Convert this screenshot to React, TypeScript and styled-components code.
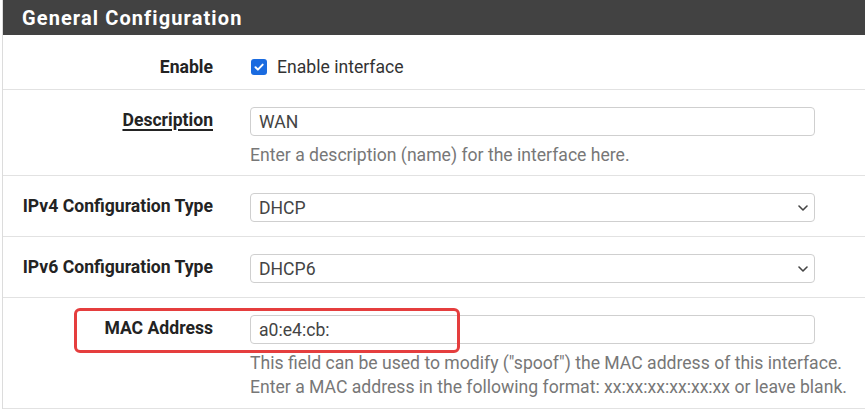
import React from "react";
import styled, { createGlobalStyle } from "styled-components";

const GlobalStyle = createGlobalStyle`
  html, body { margin: 0; padding: 0; background: #fff; }
  body { font-family: Roboto, "Liberation Sans", Arial, sans-serif; }
  * { box-sizing: border-box; }
`;

const Page = styled.div`
  padding-left: 2px;
  width: 865px;
  overflow: hidden;
`;

const Panel = styled.section`
  border-left: 1px solid #dcdcdc;
`;

const Header = styled.h2`
  margin: 0;
  height: 35px;
  background: #424242;
  color: #fff;
  display: flex;
  align-items: center;
  padding-left: 19px;
  font-size: 20px;
  font-weight: 700;
  letter-spacing: 1.1px;
`;

const Row = styled.div<{ $pb: number }>`
  position: relative;
  display: grid;
  grid-template-columns: 210px 565px;
  column-gap: 37px;
  padding: 17px 0 ${(p) => p.$pb}px;
  border-bottom: 1px solid #e2e2e2;
`;

const Label = styled.label<{ $lh: number; $underline?: boolean }>`
  text-align: right;
  padding-top: 1px;
  font-size: 17.6px;
  font-weight: 700;
  color: #232323;
  line-height: ${(p) => p.$lh}px;
  white-space: nowrap;
  span {
    text-decoration: ${(p) => (p.$underline ? "underline" : "none")};
    text-decoration-thickness: 2px;
    text-underline-offset: 3px;
  }
`;

const Control = styled.div`
  display: flex;
  flex-direction: column;
  min-width: 0;
`;

const CheckLine = styled.div`
  display: flex;
  align-items: center;
  height: 29px;
  gap: 10px;
  padding-left: 1px;
  font-size: 17.6px;
  color: #333;
`;

const CheckBox = styled.span`
  width: 16px;
  height: 16px;
  border-radius: 3px;
  background: #1a6be0;
  display: inline-flex;
  align-items: center;
  justify-content: center;
`;

const TextInput = styled.input`
  height: 29px;
  width: 100%;
  border: 1px solid #cfcfcf;
  border-radius: 4px;
  padding: 0 8px;
  font-family: inherit;
  font-size: 17.6px;
  color: #444;
  background: #fff;
  outline: none;
`;

const SelectWrap = styled.div`
  position: relative;
  height: 29px;
`;

const Select = styled.select`
  appearance: none;
  -webkit-appearance: none;
  height: 29px;
  width: 100%;
  border: 1px solid #cfcfcf;
  border-radius: 4px;
  padding: 0 8px;
  font-family: inherit;
  font-size: 17.6px;
  color: #444;
  background: #fff;
  outline: none;
`;

const Chevron = styled.svg`
  position: absolute;
  right: 7px;
  top: 12px;
  pointer-events: none;
`;

const Help = styled.div`
  margin-top: 7px;
  font-size: 17.6px;
  line-height: 24px;
  color: #777;
  white-space: nowrap;
`;

const Highlight = styled.div`
  position: absolute;
  left: 71px;
  top: 10px;
  width: 386px;
  height: 45px;
  border: 3px solid #e53e3e;
  border-radius: 6px;
  pointer-events: none;
`;

const ChevronIcon = () => (
  <Chevron width="10" height="6" viewBox="0 0 10 6">
    <path d="M1 1l4 4 4-4" fill="none" stroke="#444" strokeWidth="1.6" strokeLinecap="round" strokeLinejoin="round" />
  </Chevron>
);

const SelectField = ({ value }: { value: string }) => (
  <SelectWrap>
    <Select value={value} onChange={() => {}}>
      <option>{value}</option>
    </Select>
    <ChevronIcon />
  </SelectWrap>
);

export default function App() {
  return (
    <>
      <GlobalStyle />
      <Page>
        <Panel>
          <Header>General Configuration</Header>

          <Row $pb={8}>
            <Label $lh={28}>
              <span>Enable</span>
            </Label>
            <Control>
              <CheckLine>
                <CheckBox>
                  <svg width="12" height="12" viewBox="0 0 12 12">
                    <path d="M2.5 6.2l2.4 2.4 4.8-5" fill="none" stroke="#fff" strokeWidth="2" strokeLinecap="round" strokeLinejoin="round" />
                  </svg>
                </CheckBox>
                Enable interface
              </CheckLine>
            </Control>
          </Row>

          <Row $pb={8}>
            <Label $lh={25} $underline>
              <span>Description</span>
            </Label>
            <Control>
              <TextInput value="WAN" readOnly />
              <Help>Enter a description (name) for the interface here.</Help>
            </Control>
          </Row>

          <Row $pb={14}>
            <Label $lh={25}>
              <span>IPv4 Configuration Type</span>
            </Label>
            <Control>
              <SelectField value="DHCP" />
            </Control>
          </Row>

          <Row $pb={14}>
            <Label $lh={25}>
              <span>IPv6 Configuration Type</span>
            </Label>
            <Control>
              <SelectField value="DHCP6" />
            </Control>
          </Row>

          <Row $pb={9}>
            <Label $lh={25}>
              <span>MAC Address</span>
            </Label>
            <Control>
              <TextInput value="a0:e4:cb:" readOnly />
              <Help>
                This field can be used to modify ("spoof") the MAC address of this interface.
                <br />
                Enter a MAC address in the following format: xx:xx:xx:xx:xx:xx or leave blank.
              </Help>
            </Control>
            <Highlight />
          </Row>
        </Panel>
      </Page>
    </>
  );
}
